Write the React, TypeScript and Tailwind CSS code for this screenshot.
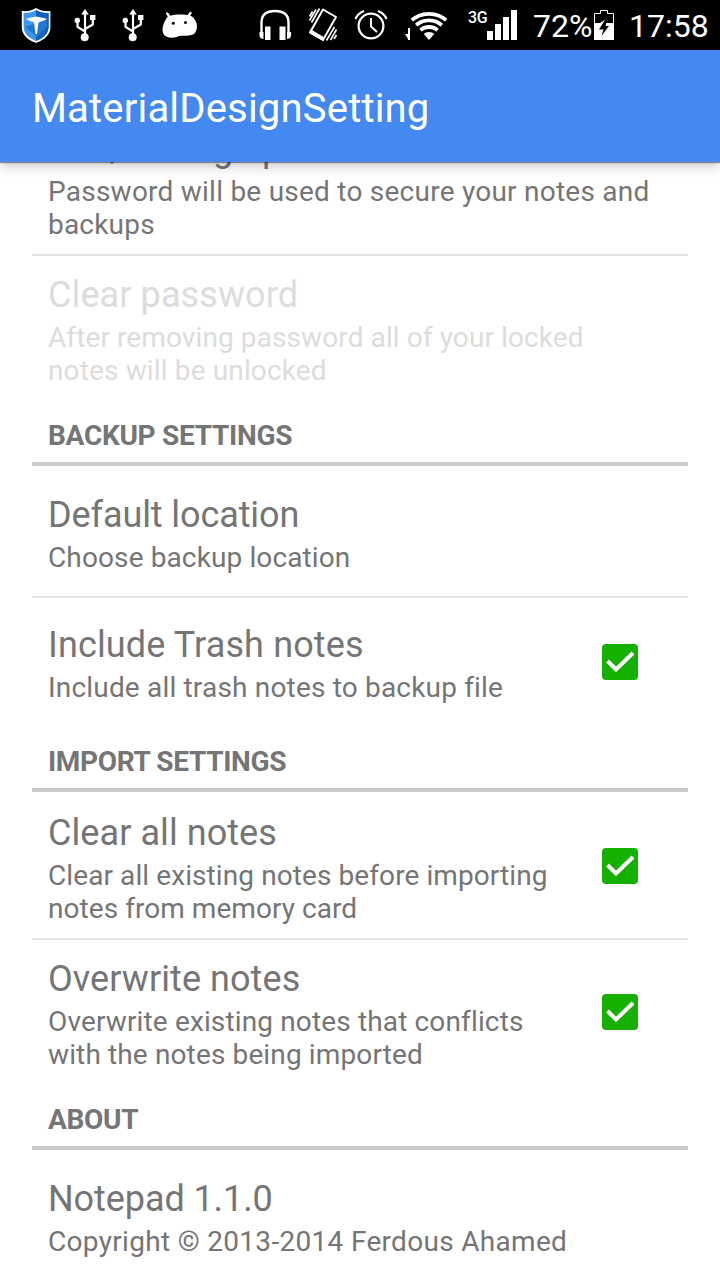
import type { ReactNode } from "react";

function Glyph({ x, w, children }: { x: number; w: number; children: ReactNode }) {
  return (
    <svg className="shrink-0" width={w} height={50} viewBox={`${x} 0 ${w} 50`} fill="none" stroke="none">
      {children}
    </svg>
  );
}

function Usb() {
  return (
    <Glyph x={60} w={48}>
      <path d="M85 12V37M85 31.500L77.500 27V21M85 29L92.800 24.500V17" stroke="#fff" strokeWidth="2.200" />
      <path d="M85 9L88.800 14.500H81.200Z" fill="#fff" />
      <circle cx="84.700" cy="37.300" r="4" fill="#fff" />
      <circle cx="77.300" cy="20.500" r="2.700" fill="#fff" />
      <rect x="90" y="15" width="5.400" height="5" fill="#fff" />
    </Glyph>
  );
}

function StatusBar() {
  return (
    <div className="flex h-[50px] shrink-0 items-center bg-black text-white">
      <Glyph x={0} w={60}>
        <path d="M36 9C32 11.500 27 12.200 22.700 12V27C22.700 34 28 39 36 42C44 39 49.500 34 49.500 27V12C45 12.200 40 11.500 36 9Z" fill="#3d98f0" stroke="#fff" strokeWidth="1.800" />
        <path d="M36 10C40 12.500 45 13 48.600 13V27C48.600 33.500 44 38 36 41Z" fill="#1260b5" />
        <path d="M36 23L47 20V27L37 37L25 27Z" fill="#2478d4" />
        <path d="M26 19C30 17.500 33 17.500 36 16.500C39 17.500 43 17.500 47 19C44 21 40 21.500 38.500 22.500L37 34H35.500L34 22.500C33 21.500 29 21 26 19Z" fill="#fff" />
      </Glyph>
      <Usb />
      <Usb />
      <Glyph x={156} w={94}>
        <path d="M169.500 17L167.200 13.500M188.500 16L190.500 13" stroke="#fff" strokeWidth="2.400" strokeLinecap="round" />
        <path d="M166 19C168 15.500 173 14.500 180 14.500C188 14.500 193 15.500 195 20C198 24 197.500 31 194 34C189 36.500 184 35.500 179 36C174 38.500 166 38.500 163.500 34C161.500 29 163 24 166 19Z" fill="#fff" />
        <circle cx="173.300" cy="23.300" r="1.500" fill="#000" />
        <circle cx="185.500" cy="22.500" r="1.500" fill="#000" />
      </Glyph>
      <Glyph x={250} w={48}>
        <path d="M261.500 32V22.500C261.500 15 266 11 275 11C284 11 288.500 15 288.500 22.500V32" stroke="#fff" strokeWidth="2.400" />
        <path d="M265 26.500H270.500V40H265ZM279.500 26.500H285.500V40H279.500ZM263.500 39C260 38.500 259 37 259.500 32H263.500ZM287 39C290.500 38.500 291.500 37 291 32H287Z" fill="#fff" />
      </Glyph>
      <Glyph x={298} w={48}>
        <path d="M323 9.500L336 17L323 40L310 32.500Z" stroke="#fff" strokeWidth="2" strokeLinejoin="round" />
        <path d="M311 29.500L324.500 37.500L323 41L309 33Z" fill="#fff" />
        <path d="M312.500 11.500L309.500 16.500M316 9.500L309.500 20.500M319.500 8.500L311.500 22.500M334.500 27L326.500 40.500M336.500 29.500L330.500 40M336.500 35L334 39" stroke="#fff" strokeWidth="1.600" />
      </Glyph>
      <Glyph x={346} w={48}>
        <circle cx="371" cy="26" r="12.400" stroke="#fff" strokeWidth="2.200" />
        <path d="M371 18V26.500L377 32" stroke="#fff" strokeWidth="2" />
        <path d="M355.500 19C357 15 360 12.500 364 11M386.500 19C385 15 382 12.500 378 11" stroke="#fff" strokeWidth="2.200" />
      </Glyph>
      <Glyph x={394} w={74}>
        <clipPath id="signal-wedge">
          <path d="M429 40L408 15.700V5H450V15.700Z" />
        </clipPath>
        <g clipPath="url(#signal-wedge)">
          <circle cx="429" cy="40" r="26.200" stroke="#fff" strokeWidth="3.800" />
          <circle cx="429" cy="40" r="19.600" stroke="#fff" strokeWidth="3.800" />
          <circle cx="429" cy="40" r="13" stroke="#fff" strokeWidth="3.800" />
          <circle cx="429" cy="40" r="8" fill="#fff" />
        </g>
        <path d="M408 28H410V40H408ZM405 34H408V39Z" fill="#fff" />
      </Glyph>
      <span className="-mr-[1px] mb-[14px] w-5 text-[16px] leading-5 font-medium tracking-[-0.3px]">3G</span>
      <Glyph x={487} w={46}>
        <path d="M487 31H493V40H487ZM495 24H501V40H495ZM503 17H509V40H503ZM511 10H517V40H511Z" fill="#fff" />
      </Glyph>
      <span className="w-[60px] pt-[1px] text-[32px] leading-[50px] whitespace-nowrap">72%</span>
      <Glyph x={593} w={36}>
        <path d="M594.500 23.500V13.500H600.500V10.500H607.500V13.500H613.500V23.500" stroke="#fff" />
        <path d="M594 23H600L606 19L605 23H614V40H594Z" fill="#fff" />
        <path d="M605.500 19L599 29.500H603.500L601.500 36L609 26H605.500L607 20Z" fill="#000" />
      </Glyph>
      <span className="pt-[1px] text-[32px] leading-[50px] whitespace-nowrap">17:58</span>
    </div>
  );
}

type Line = { text: string; tracking: string };

function Checkbox() {
  return (
    <span className="mr-[50px] flex size-9 shrink-0 rounded-[4px] bg-[#16b000]">
      <svg width="36" height="36" viewBox="0 0 36 36" fill="none">
        <path d="M5.500 17L14 25.500L31 9" stroke="#fff" strokeWidth="4" />
      </svg>
    </span>
  );
}

function Row({ title, lines, checked, disabled, divider }: { title: Line; lines: Line[]; checked?: boolean; disabled?: boolean; divider?: boolean }) {
  const tall = lines.length > 1;
  return (
    <div className={divider ? "border-b-2 border-[#e3e3e3]" : ""}>
      <div className={`flex items-center justify-between pl-4 ${tall ? "h-[146px]" : "h-[130px]"} ${divider ? "pt-[2px]" : "pb-[2px]"} ${disabled ? "text-[#dcdcdc]" : "text-[#757575]"}`}>
        <div className={`whitespace-nowrap ${tall ? "pt-[5px]" : "pt-[3px]"}`}>
          <div className={`mb-[5px] text-[36px] leading-[42px] ${title.tracking}`}>{title.text}</div>
          {lines.map((line) => (
            <div key={line.text} className={`text-[28px] leading-[33px] ${line.tracking}`}>{line.text}</div>
          ))}
        </div>
        {checked && <Checkbox />}
      </div>
    </div>
  );
}

function Category({ text, tracking }: Line) {
  return (
    <div className={`h-16 border-b-4 border-[#cacaca] pt-[17px] pl-4 text-[28px] leading-[33px] font-bold text-[#757575] ${tracking}`}>{text}</div>
  );
}

export default function App() {
  return (
    <div className="flex h-[1280px] w-[720px] flex-col overflow-hidden bg-white font-['Roboto',sans-serif]">
      <StatusBar />
      <header className="z-10 flex h-28 shrink-0 items-center bg-[#4489f1] pt-[6px] pl-8 text-[40px] tracking-[0.19px] text-white shadow-[0_1px_1px_rgba(0,0,0,0.4),0_4px_12px_rgba(0,0,0,0.22)]">
        <h1>MaterialDesignSetting</h1>
      </header>
      <main className="-mt-[54px] px-8">
        <Row
          divider
          title={{ text: "Set / change password", tracking: "tracking-[0.2px]" }}
          lines={[
            { text: "Password will be used to secure your notes and", tracking: "tracking-[0.24px]" },
            { text: "backups", tracking: "tracking-[0.2px]" },
          ]}
        />
        <Row
          disabled
          title={{ text: "Clear password", tracking: "tracking-[0.1px]" }}
          lines={[
            { text: "After removing password all of your locked", tracking: "tracking-[0.1px]" },
            { text: "notes will be unlocked", tracking: "tracking-[0.14px]" },
          ]}
        />
        <Category text="BACKUP SETTINGS" tracking="tracking-[-0.28px]" />
        <Row
          divider
          title={{ text: "Default location", tracking: "tracking-[-0.1px]" }}
          lines={[{ text: "Choose backup location", tracking: "tracking-[0.12px]" }]}
        />
        <Row
          checked
          title={{ text: "Include Trash notes", tracking: "tracking-[0.13px]" }}
          lines={[{ text: "Include all trash notes to backup file", tracking: "tracking-[0.18px]" }]}
        />
        <Category text="IMPORT SETTINGS" tracking="tracking-[-0.34px]" />
        <Row
          divider
          checked
          title={{ text: "Clear all notes", tracking: "tracking-[0.07px]" }}
          lines={[
            { text: "Clear all existing notes before importing", tracking: "tracking-[0.09px]" },
            { text: "notes from memory card", tracking: "tracking-[0.05px]" },
          ]}
        />
        <Row
          checked
          title={{ text: "Overwrite notes", tracking: "tracking-[0.07px]" }}
          lines={[
            { text: "Overwrite existing notes that conflicts", tracking: "tracking-[0.14px]" },
            { text: "with the notes being imported", tracking: "tracking-[0.13px]" },
          ]}
        />
        <Category text="ABOUT" tracking="tracking-[-0.3px]" />
        <Row
          divider
          title={{ text: "Notepad 1.1.0", tracking: "tracking-[-0.08px]" }}
          lines={[{ text: "Copyright © 2013-2014 Ferdous Ahamed", tracking: "tracking-[0.31px]" }]}
        />
      </main>
    </div>
  );
}
